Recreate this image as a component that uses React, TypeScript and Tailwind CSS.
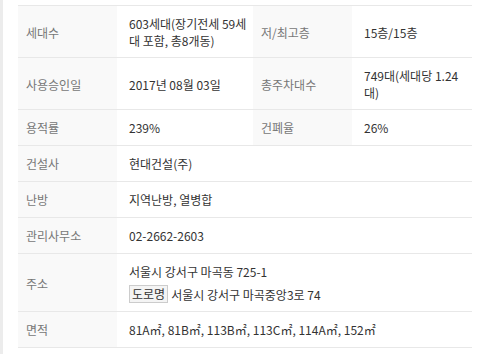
const label =
  "bg-[#f9f9f9] pl-[8px] pr-2 pt-[9px] text-left align-middle font-normal text-[#777777]";
const value = "pl-[12px] pr-[4px] pt-[9px] align-middle text-[#333333]";

type Row = { k: string; v: React.ReactNode; k2?: string; v2?: React.ReactNode; tall?: boolean };

const rows: Row[] = [
  {
    k: "세대수",
    v: "603세대(장기전세 59세대 포함, 총8개동)",
    k2: "저/최고층",
    v2: "15층/15층",
    tall: true,
  },
  {
    k: "사용승인일",
    v: "2017년 08월 03일",
    k2: "총주차대수",
    v2: "749대(세대당 1.24대)",
    tall: true,
  },
  { k: "용적률", v: "239%", k2: "건폐율", v2: "26%" },
  { k: "건설사", v: "현대건설(주)" },
  { k: "난방", v: "지역난방, 열병합" },
  { k: "관리사무소", v: "02-2662-2603" },
  {
    k: "주소",
    tall: true,
    v: (
      <div>
        <div>서울시 강서구 마곡동 725-1</div>
        <div className="mt-[5px] flex items-center">
          <span className="mr-[3px] border border-[#cccccc] bg-[#f4f4f4] px-[2px] leading-[16px] text-[#333333]">
            도로명
          </span>
          서울시 강서구 마곡중앙3로 74
        </div>
      </div>
    ),
  },
  { k: "면적", v: "81A㎡, 81B㎡, 113B㎡, 113C㎡, 114A㎡, 152㎡" },
];

export default function App() {
  return (
    <div className="h-[354px] w-[484px] overflow-hidden border-l-[3px] border-[#ececec] bg-white pt-[5px] pl-[15px] font-['Noto_Sans_CJK_KR','Noto_Sans',sans-serif] text-[12px] leading-[17px]">
      <table className="w-[454px] table-fixed border-collapse">
        <colgroup>
          <col className="w-[99px]" />
          <col className="w-[136px]" />
          <col className="w-[99px]" />
          <col className="w-[120px]" />
        </colgroup>
        <tbody>
          {rows.map((r) => {
            const pb = r.tall ? " pb-[8px]" : " pb-[9px]";
            return (
              <tr key={r.k} className="border-y border-[#e8e8e8]">
                <th className={label + pb}>{r.k}</th>
                {r.k2 ? (
                  <>
                    <td className={value + pb}>{r.v}</td>
                    <th className={label + pb}>{r.k2}</th>
                    <td className={value + pb}>{r.v2}</td>
                  </>
                ) : (
                  <td className={value + pb} colSpan={3}>
                    {r.v}
                  </td>
                )}
              </tr>
            );
          })}
        </tbody>
      </table>
    </div>
  );
}
